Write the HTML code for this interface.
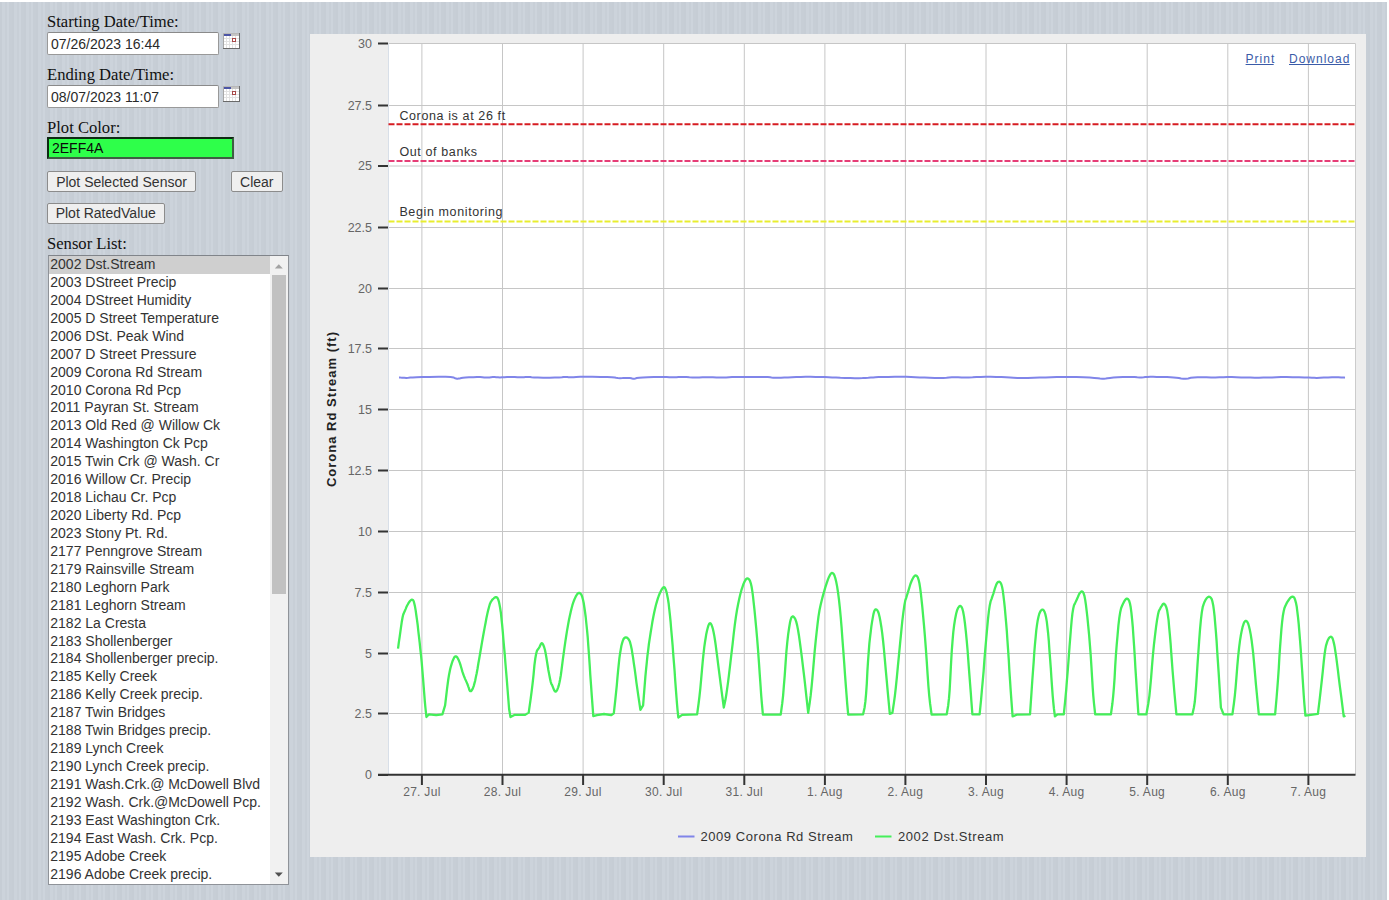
<!DOCTYPE html>
<html><head><meta charset="utf-8"><style>
html,body{margin:0;padding:0;}
body{width:1389px;height:900px;overflow:hidden;position:relative;background:#fff;font-family:"Liberation Sans",sans-serif;}
#bg{position:absolute;left:0;top:2px;width:1387px;height:898px;background-color:#c9d0d8;
background-image:repeating-linear-gradient(90deg,#c6cdd5 0px,#c6cdd5 2px,#ccd3db 2px,#ccd3db 5px,#c8cfd7 5px,#c8cfd7 7px,#cdd4dc 7px,#cdd4dc 9px,#c7ced6 9px,#c7ced6 12px);}
.lbl{position:absolute;left:47px;font-family:"Liberation Serif",serif;font-size:16.6px;color:#111;white-space:nowrap;line-height:1;}
.inp{position:absolute;left:47px;width:170px;height:20.5px;background:#fff;border:1px solid #999;border-top-color:#8a8a8a;border-radius:2px;}
.inp span,.clr span{position:absolute;left:4px;font-size:14px;line-height:1;color:#2a2a2a;white-space:nowrap;}
.cal{position:absolute;left:223px;}
.clr{position:absolute;left:47px;top:137.2px;width:182.5px;height:17.5px;background:#2eff4a;border:2px solid #0e2a12;border-right-color:#3e5e42;border-bottom-color:#3e5e42;}
.btn{position:absolute;height:19.5px;background:#efefef;border:1px solid #8c8c8c;border-radius:2px;font-size:14px;color:#333;white-space:nowrap;}
.btn span{position:absolute;left:0;right:0;text-align:center;line-height:1;}
#sel{position:absolute;left:47.5px;top:255px;width:239px;height:627.5px;background:#fff;border:1px solid #8f9399;border-top-color:#80848a;overflow:hidden;}
#sel .o{position:absolute;left:0;width:219.5px;height:17.93px;font-size:14px;line-height:17.93px;padding-left:1.8px;color:#333;white-space:nowrap;}
#sel .o.sel{background:#cfcfcf;}
#sb{position:absolute;left:221.5px;top:0;width:17.5px;height:100%;background:#f1f1f1;}
#thumb{position:absolute;left:2px;top:18.5px;width:13.5px;height:319px;background:#c1c1c1;}
#panel{position:absolute;left:310px;top:33.5px;width:1056px;height:823px;background:#eeeeee;}
svg.ch{position:absolute;left:0;top:0;}
.pl{font-size:12.5px;fill:#333;letter-spacing:0.62px;}
.yl{font-size:12.5px;fill:#666;text-anchor:end;}
.xl{font-size:12px;fill:#666;text-anchor:middle;letter-spacing:0.3px;}
.yt{font-size:13px;font-weight:bold;fill:#222;text-anchor:middle;letter-spacing:1px;}
.lg{font-size:13px;fill:#333;letter-spacing:0.58px;}
.lk{font-size:12px;fill:#3a5ba8;letter-spacing:1px;}
</style></head><body>
<div id="bg"></div>
<div class="lbl" style="top:14.4px">Starting Date/Time:</div>
<div class="inp" style="top:32.3px"><span style="top:3.8px;left:3px">07/26/2023 16:44</span></div>
<div class="cal" style="top:32.5px"><svg width="17" height="16" viewBox="0 0 17 16"><rect x="0" y="0" width="17" height="16" fill="#fff"/><rect x="1" y="1" width="7" height="2" fill="#4b55a6"/><rect x="8" y="1" width="8" height="2" fill="#c4c4c4"/><g stroke="#e2e2e2" stroke-width="1"><line x1="3.5" y1="3" x2="3.5" y2="15"/><line x1="6.5" y1="3" x2="6.5" y2="15"/><line x1="9.5" y1="3" x2="9.5" y2="15"/><line x1="12.5" y1="3" x2="12.5" y2="15"/><line x1="1" y1="5.5" x2="16" y2="5.5"/><line x1="1" y1="8.5" x2="16" y2="8.5"/><line x1="1" y1="11.5" x2="16" y2="11.5"/></g><rect x="9.5" y="5.5" width="3" height="3" fill="#fff" stroke="#a84848"/><line x1="0.5" y1="0" x2="0.5" y2="16" stroke="#a8a8a8"/><line x1="0" y1="0.5" x2="17" y2="0.5" stroke="#b8b8b8"/><line x1="16.5" y1="0" x2="16.5" y2="16" stroke="#6a6a6a"/><line x1="0" y1="15.5" x2="17" y2="15.5" stroke="#6a6a6a"/></svg></div>
<div class="lbl" style="top:67.4px">Ending Date/Time:</div>
<div class="inp" style="top:85.3px"><span style="top:3.8px;left:3px">08/07/2023 11:07</span></div>
<div class="cal" style="top:85.5px"><svg width="17" height="16" viewBox="0 0 17 16"><rect x="0" y="0" width="17" height="16" fill="#fff"/><rect x="1" y="1" width="7" height="2" fill="#4b55a6"/><rect x="8" y="1" width="8" height="2" fill="#c4c4c4"/><g stroke="#e2e2e2" stroke-width="1"><line x1="3.5" y1="3" x2="3.5" y2="15"/><line x1="6.5" y1="3" x2="6.5" y2="15"/><line x1="9.5" y1="3" x2="9.5" y2="15"/><line x1="12.5" y1="3" x2="12.5" y2="15"/><line x1="1" y1="5.5" x2="16" y2="5.5"/><line x1="1" y1="8.5" x2="16" y2="8.5"/><line x1="1" y1="11.5" x2="16" y2="11.5"/></g><rect x="9.5" y="5.5" width="3" height="3" fill="#fff" stroke="#a84848"/><line x1="0.5" y1="0" x2="0.5" y2="16" stroke="#a8a8a8"/><line x1="0" y1="0.5" x2="17" y2="0.5" stroke="#b8b8b8"/><line x1="16.5" y1="0" x2="16.5" y2="16" stroke="#6a6a6a"/><line x1="0" y1="15.5" x2="17" y2="15.5" stroke="#6a6a6a"/></svg></div>
<div class="lbl" style="top:120.4px">Plot Color:</div>
<div class="clr"><span style="top:1.6px;left:3px;color:#0a0a0a">2EFF4A</span></div>
<div class="btn" style="left:47px;top:171.2px;width:147px;height:19px"><span style="top:2.5px">Plot Selected Sensor</span></div>
<div class="btn" style="left:231px;top:171.2px;width:49.5px;height:19px"><span style="top:2.5px">Clear</span></div>
<div class="btn" style="left:47px;top:202.7px;width:115.5px"><span style="top:2.5px">Plot RatedValue</span></div>
<div class="lbl" style="top:236.4px">Sensor List:</div>
<div id="sel"><div class="o sel" style="top:0.00px">2002 Dst.Stream</div><div class="o" style="top:17.93px">2003 DStreet Precip</div><div class="o" style="top:35.86px">2004 DStreet Humidity</div><div class="o" style="top:53.79px">2005 D Street Temperature</div><div class="o" style="top:71.72px">2006 DSt. Peak Wind</div><div class="o" style="top:89.65px">2007 D Street Pressure</div><div class="o" style="top:107.58px">2009 Corona Rd Stream</div><div class="o" style="top:125.51px">2010 Corona Rd Pcp</div><div class="o" style="top:143.44px">2011 Payran St. Stream</div><div class="o" style="top:161.37px">2013 Old Red @ Willow Ck</div><div class="o" style="top:179.30px">2014 Washington Ck Pcp</div><div class="o" style="top:197.23px">2015 Twin Crk @ Wash. Cr</div><div class="o" style="top:215.16px">2016 Willow Cr. Precip</div><div class="o" style="top:233.09px">2018 Lichau Cr. Pcp</div><div class="o" style="top:251.02px">2020 Liberty Rd. Pcp</div><div class="o" style="top:268.95px">2023 Stony Pt. Rd.</div><div class="o" style="top:286.88px">2177 Penngrove Stream</div><div class="o" style="top:304.81px">2179 Rainsville Stream</div><div class="o" style="top:322.74px">2180 Leghorn Park</div><div class="o" style="top:340.67px">2181 Leghorn Stream</div><div class="o" style="top:358.60px">2182 La Cresta</div><div class="o" style="top:376.53px">2183 Shollenberger</div><div class="o" style="top:394.46px">2184 Shollenberger precip.</div><div class="o" style="top:412.39px">2185 Kelly Creek</div><div class="o" style="top:430.32px">2186 Kelly Creek precip.</div><div class="o" style="top:448.25px">2187 Twin Bridges</div><div class="o" style="top:466.18px">2188 Twin Bridges precip.</div><div class="o" style="top:484.11px">2189 Lynch Creek</div><div class="o" style="top:502.04px">2190 Lynch Creek precip.</div><div class="o" style="top:519.97px">2191 Wash.Crk.@ McDowell Blvd</div><div class="o" style="top:537.90px">2192 Wash. Crk.@McDowell Pcp.</div><div class="o" style="top:555.83px">2193 East Washington Crk.</div><div class="o" style="top:573.76px">2194 East Wash. Crk. Pcp.</div><div class="o" style="top:591.69px">2195 Adobe Creek</div><div class="o" style="top:609.62px">2196 Adobe Creek precip.</div><div id="sb"><div id="thumb"></div><svg style="position:absolute;left:0;top:0" width="17.5" height="627"><path d="M4.8 12.5 L8.8 8.2 L12.8 12.5 Z" fill="#a3a3a3"/><path d="M4.8 616.5 L8.8 620.8 L12.8 616.5 Z" fill="#505050"/></svg></div></div>
<div id="panel"></div>
<svg class="ch" width="1389" height="900" font-family="Liberation Sans, sans-serif"><rect x="388.5" y="43.5" width="967.0" height="731.3" fill="#fff"/><line x1="388.5" y1="713.5" x2="1355.5" y2="713.5" stroke="#c6c6c6" stroke-width="1"/><line x1="388.5" y1="653.5" x2="1355.5" y2="653.5" stroke="#c6c6c6" stroke-width="1"/><line x1="388.5" y1="592.5" x2="1355.5" y2="592.5" stroke="#c6c6c6" stroke-width="1"/><line x1="388.5" y1="531.5" x2="1355.5" y2="531.5" stroke="#c6c6c6" stroke-width="1"/><line x1="388.5" y1="470.5" x2="1355.5" y2="470.5" stroke="#c6c6c6" stroke-width="1"/><line x1="388.5" y1="409.5" x2="1355.5" y2="409.5" stroke="#c6c6c6" stroke-width="1"/><line x1="388.5" y1="348.5" x2="1355.5" y2="348.5" stroke="#c6c6c6" stroke-width="1"/><line x1="388.5" y1="288.5" x2="1355.5" y2="288.5" stroke="#c6c6c6" stroke-width="1"/><line x1="388.5" y1="227.5" x2="1355.5" y2="227.5" stroke="#c6c6c6" stroke-width="1"/><line x1="388.5" y1="166.0" x2="1355.5" y2="166.0" stroke="#c6c6c6" stroke-width="1"/><line x1="388.5" y1="105.5" x2="1355.5" y2="105.5" stroke="#c6c6c6" stroke-width="1"/><line x1="388.5" y1="43.5" x2="1355.5" y2="43.5" stroke="#c6c6c6" stroke-width="1"/><line x1="421.9" y1="43.5" x2="421.9" y2="774.8" stroke="#c6c6c6" stroke-width="1"/><line x1="502.5" y1="43.5" x2="502.5" y2="774.8" stroke="#c6c6c6" stroke-width="1"/><line x1="583.1" y1="43.5" x2="583.1" y2="774.8" stroke="#c6c6c6" stroke-width="1"/><line x1="663.7" y1="43.5" x2="663.7" y2="774.8" stroke="#c6c6c6" stroke-width="1"/><line x1="744.3" y1="43.5" x2="744.3" y2="774.8" stroke="#c6c6c6" stroke-width="1"/><line x1="824.9" y1="43.5" x2="824.9" y2="774.8" stroke="#c6c6c6" stroke-width="1"/><line x1="905.4" y1="43.5" x2="905.4" y2="774.8" stroke="#c6c6c6" stroke-width="1"/><line x1="986.0" y1="43.5" x2="986.0" y2="774.8" stroke="#c6c6c6" stroke-width="1"/><line x1="1066.6" y1="43.5" x2="1066.6" y2="774.8" stroke="#c6c6c6" stroke-width="1"/><line x1="1147.2" y1="43.5" x2="1147.2" y2="774.8" stroke="#c6c6c6" stroke-width="1"/><line x1="1227.8" y1="43.5" x2="1227.8" y2="774.8" stroke="#c6c6c6" stroke-width="1"/><line x1="1308.4" y1="43.5" x2="1308.4" y2="774.8" stroke="#c6c6c6" stroke-width="1"/><line x1="1355.5" y1="43.5" x2="1355.5" y2="774.8" stroke="#cccccc" stroke-width="1"/><line x1="388.5" y1="43.5" x2="388.5" y2="774.8" stroke="#d8dfe8" stroke-width="1"/><line x1="388.5" y1="124.3" x2="1355.5" y2="124.3" stroke="#d61c22" stroke-width="2" stroke-dasharray="6,2"/><text x="399.4" y="119.5" class="pl">Corona is at 26 ft</text><line x1="388.5" y1="161.1" x2="1355.5" y2="161.1" stroke="#e63d76" stroke-width="2" stroke-dasharray="6,2"/><text x="399.4" y="156.4" class="pl">Out of banks</text><line x1="388.5" y1="221.4" x2="1355.5" y2="221.4" stroke="#e8ee2e" stroke-width="2" stroke-dasharray="6,2"/><text x="399.4" y="216.3" class="pl">Begin monitoring</text><polyline points="399.0,377.5 399.5,377.5 400.5,377.6 402.1,377.7 404.2,377.8 406.3,377.9 408.4,377.8 410.5,377.6 412.7,377.4 416.6,377.2 422.2,377.0 429.5,376.9 438.6,376.8 445.6,376.8 450.6,377.0 453.5,377.4 454.4,377.9 455.2,378.3 456.1,378.6 457.0,378.7 457.8,378.7 458.7,378.6 459.5,378.5 460.4,378.3 461.3,378.0 463.0,377.7 465.6,377.5 469.0,377.3 473.4,377.2 477.0,377.1 480.1,377.1 482.4,377.2 484.2,377.4 485.9,377.5 487.6,377.5 489.4,377.4 491.1,377.2 492.8,377.1 494.5,377.1 496.3,377.2 498.0,377.3 499.9,377.4 502.1,377.3 504.5,377.2 507.1,377.0 509.7,376.9 512.2,376.9 514.8,377.0 517.4,377.2 519.8,377.3 522.0,377.3 523.9,377.2 525.6,377.0 527.3,376.9 528.8,376.9 530.2,377.0 531.5,377.3 534.1,377.5 537.9,377.6 543.1,377.7 549.6,377.7 554.9,377.6 559.0,377.5 561.9,377.3 563.7,377.0 565.2,376.9 566.5,376.9 567.5,377.0 568.4,377.2 569.7,377.3 571.4,377.3 573.6,377.2 576.2,377.0 580.2,376.8 585.6,376.8 592.4,376.8 600.6,376.9 607.1,377.0 611.8,377.2 614.8,377.5 616.1,377.8 617.9,378.1 620.0,378.2 622.5,378.1 625.5,377.9 628.0,377.9 629.9,378.0 631.3,378.2 632.2,378.5 633.1,378.7 634.2,378.7 635.4,378.5 636.7,378.1 639.2,377.7 642.9,377.4 647.7,377.2 653.8,377.0 658.9,376.9 663.3,376.9 666.7,377.0 669.3,377.2 671.8,377.3 674.2,377.3 676.4,377.2 678.6,377.0 681.0,376.9 683.6,376.9 686.4,377.0 689.4,377.3 692.5,377.4 695.8,377.5 699.1,377.4 702.6,377.2 706.0,377.2 709.5,377.2 712.9,377.2 716.4,377.4 719.7,377.5 723.0,377.5 726.1,377.4 729.1,377.2 732.1,377.1 734.9,377.0 737.6,377.0 740.2,377.0 743.6,377.0 747.9,377.0 753.1,377.0 759.2,377.0 764.0,377.0 767.7,377.1 770.2,377.3 771.5,377.5 773.2,377.7 775.4,377.8 777.9,377.8 781.0,377.7 784.3,377.6 788.0,377.5 792.0,377.3 796.3,377.0 800.8,376.9 805.6,376.8 810.6,376.8 815.7,376.9 820.5,377.0 824.8,377.1 828.7,377.2 832.2,377.4 836.0,377.6 840.4,377.8 845.1,377.9 850.3,378.1 854.9,378.2 859.0,378.2 862.5,378.1 865.5,377.9 868.3,377.8 870.9,377.6 873.2,377.4 875.4,377.2 878.6,377.1 883.0,377.0 888.4,376.9 894.8,376.8 900.8,376.8 906.2,376.8 911.0,377.0 915.4,377.2 919.9,377.4 924.6,377.6 929.6,377.8 934.8,378.0 939.3,378.1 943.2,378.1 946.5,377.8 949.0,377.5 951.9,377.3 954.9,377.2 958.1,377.2 961.6,377.4 965.1,377.5 968.8,377.4 972.6,377.3 976.5,377.0 980.8,376.9 985.6,376.8 990.7,376.8 996.3,376.9 1001.4,377.0 1006.0,377.2 1010.0,377.5 1013.4,377.8 1017.5,378.1 1022.3,378.1 1027.7,378.0 1033.7,377.8 1039.7,377.6 1045.5,377.4 1051.2,377.2 1056.8,377.0 1062.9,376.9 1069.4,376.9 1076.3,377.0 1083.6,377.3 1089.7,377.6 1094.4,377.9 1097.9,378.2 1100.0,378.5 1102.1,378.7 1104.0,378.7 1105.8,378.5 1107.5,378.2 1110.0,377.9 1113.5,377.6 1117.8,377.3 1123.0,377.0 1127.5,376.9 1131.4,376.9 1134.6,377.0 1137.2,377.3 1139.6,377.4 1141.7,377.4 1143.7,377.3 1145.4,377.0 1147.6,376.9 1150.2,376.8 1153.2,376.8 1156.7,376.9 1160.1,376.9 1163.6,377.0 1167.0,377.1 1170.5,377.2 1173.6,377.4 1176.4,377.7 1178.9,378.0 1181.1,378.5 1183.3,378.7 1185.7,378.7 1188.2,378.4 1190.8,377.8 1193.9,377.4 1197.6,377.2 1201.8,377.2 1206.5,377.3 1211.1,377.4 1215.4,377.4 1219.5,377.3 1223.4,377.2 1227.5,377.1 1231.8,377.1 1236.3,377.2 1241.1,377.4 1245.7,377.5 1250.3,377.6 1254.7,377.7 1259.0,377.7 1263.3,377.6 1267.7,377.5 1272.0,377.4 1276.3,377.2 1281.2,377.1 1286.6,377.1 1292.5,377.2 1299.0,377.3 1304.4,377.4 1308.7,377.6 1311.9,377.7 1314.1,377.8 1316.8,377.9 1320.0,377.8 1323.8,377.6 1328.1,377.4 1332.0,377.2 1335.5,377.2 1338.5,377.2 1341.1,377.4 1343.0,377.5 1344.3,377.6 1345.0,377.7" fill="none" stroke="#8085e9" stroke-width="2"/><polyline points="398.0,648.6 398.3,646.6 398.8,642.6 399.7,636.6 400.8,628.6 401.7,622.3 402.5,617.7 403.1,614.9 403.6,613.8 404.1,612.4 404.8,610.9 405.6,609.1 406.4,607.1 407.3,605.3 408.2,603.7 409.1,602.2 410.0,601.0 410.8,600.2 411.6,599.7 412.3,599.7 413.0,600.0 413.7,601.3 414.3,603.5 415.0,606.6 415.7,610.6 416.3,615.0 417.0,619.9 417.7,625.2 418.3,631.0 419.0,636.9 419.7,642.9 420.3,649.0 421.0,655.2 421.7,662.1 422.3,669.7 423.0,677.9 423.7,686.8 424.3,694.5 424.8,701.1 425.4,707.5 426.4,717.0 429.1,714.3 436.2,715.2 442.4,714.3 445.1,705.4 447.1,688.4 448.2,680.0 449.1,674.4 450.0,669.9 450.9,666.3 451.8,663.3 452.7,660.7 453.6,658.7 454.4,657.1 455.3,656.3 456.2,656.3 457.1,657.1 458.0,658.7 458.9,660.6 459.8,662.9 460.7,665.7 461.6,668.8 462.3,671.4 463.0,673.5 463.6,675.1 464.0,676.2 464.6,677.6 465.2,679.1 466.0,680.9 466.9,682.9 467.7,684.8 468.3,686.6 468.9,688.2 469.3,689.8 469.8,690.8 470.4,691.2 471.0,691.1 471.7,690.4 472.3,689.4 473.0,687.9 473.7,686.1 474.3,683.9 475.1,681.0 475.8,677.4 476.7,673.2 477.6,668.3 478.4,663.3 479.3,658.2 480.2,653.0 481.1,647.7 482.0,642.4 482.9,637.3 483.8,632.3 484.7,627.4 485.6,622.8 486.4,618.3 487.3,614.1 488.2,610.1 489.1,606.8 489.8,604.3 490.6,602.4 491.2,601.3 491.9,600.3 492.7,599.3 493.6,598.5 494.4,597.7 495.3,597.2 496.1,597.1 496.8,597.3 497.4,597.9 498.1,599.2 498.8,601.3 499.4,604.1 500.1,607.7 500.8,612.2 501.4,617.8 502.1,624.3 502.8,631.9 503.4,639.6 504.1,647.3 504.8,655.2 505.4,663.2 506.1,671.3 506.8,679.6 507.6,690.0 509.1,709.0 510.5,717.0 514.4,714.9 525.1,714.9 528.7,712.6 530.7,698.6 531.8,690.1 532.7,682.6 533.6,674.3 534.4,665.4 535.3,658.5 536.2,653.5 537.1,650.4 538.0,649.3 538.8,648.1 539.6,646.8 540.3,645.3 541.0,643.8 541.7,643.2 542.5,643.5 543.2,644.8 544.1,647.0 544.9,649.8 545.6,653.1 546.3,657.0 547.0,661.4 547.7,665.7 548.3,669.7 549.0,673.4 549.7,677.0 550.3,679.9 550.8,682.1 551.3,683.7 551.8,684.6 552.3,685.6 552.8,686.9 553.4,688.4 554.1,690.1 554.8,691.2 555.4,691.6 556.1,691.4 556.8,690.6 557.4,689.4 558.1,687.6 558.8,685.4 559.4,682.8 560.1,679.4 560.8,675.4 561.4,670.8 562.1,665.4 562.8,659.9 563.6,654.1 564.4,648.1 565.3,641.9 566.2,636.0 567.1,630.4 568.0,625.2 568.9,620.3 569.8,615.9 570.7,611.9 571.6,608.3 572.4,605.2 573.3,602.4 574.2,600.0 575.1,597.9 576.0,596.1 576.8,594.7 577.6,593.7 578.3,593.1 579.0,592.9 579.7,593.0 580.3,593.4 581.0,594.2 581.7,595.3 582.3,597.2 583.0,599.7 583.7,603.0 584.3,607.0 585.0,611.7 585.7,617.0 586.3,623.0 587.0,629.7 587.7,637.2 588.3,645.7 589.0,655.0 589.7,665.2 590.3,675.1 591.0,684.7 591.8,696.1 593.3,716.1 596.9,715.2 604.0,714.0 611.1,715.2 613.8,713.4 615.3,699.9 616.1,692.1 616.8,685.3 617.4,678.1 618.1,670.6 618.8,663.9 619.4,658.1 620.1,653.2 620.8,649.2 621.4,645.8 622.1,643.1 622.8,640.9 623.4,639.3 624.2,638.2 624.9,637.6 625.8,637.3 626.7,637.6 627.5,638.1 628.3,638.8 629.0,639.9 629.7,641.2 630.3,643.2 631.0,645.9 631.7,649.2 632.3,653.2 633.1,657.9 633.8,663.2 634.7,669.2 635.6,675.9 636.4,682.4 637.3,688.7 638.4,696.4 640.4,709.9 643.1,705.4 644.6,686.4 645.4,676.4 646.1,669.1 646.8,662.3 647.4,656.1 648.2,650.0 648.9,644.0 649.8,638.1 650.7,632.3 651.6,626.9 652.4,621.8 653.3,617.0 654.2,612.6 655.1,608.5 656.0,604.8 656.9,601.6 657.8,598.7 658.7,596.0 659.7,593.5 660.8,591.2 661.9,589.1 662.9,587.8 663.8,587.2 664.6,587.4 665.2,588.4 665.9,590.0 666.6,592.3 667.2,595.2 667.9,598.8 668.6,603.2 669.2,608.6 669.9,614.8 670.6,621.9 671.2,629.3 671.9,637.1 672.6,645.2 673.2,653.7 673.9,662.3 674.6,671.2 675.2,680.3 675.9,689.7 676.5,697.5 677.0,703.9 677.5,709.7 678.3,717.5 682.2,714.9 697.1,714.3 698.6,703.5 699.5,696.2 700.3,688.6 701.1,679.8 702.0,669.6 702.8,660.7 703.6,653.1 704.3,646.9 705.0,642.0 705.7,637.7 706.3,633.9 707.0,630.7 707.7,628.0 708.3,625.9 708.9,624.4 709.5,623.5 710.1,623.1 710.7,623.5 711.4,624.6 712.1,626.4 712.9,629.0 713.6,632.2 714.3,635.9 715.0,640.2 715.7,645.1 716.4,650.6 717.2,656.6 718.0,663.1 718.9,670.2 719.8,677.2 720.7,684.1 721.8,692.6 723.8,707.6 725.3,700.6 726.2,695.2 727.1,689.2 728.1,681.8 729.2,672.9 730.3,663.7 731.4,654.1 732.6,644.2 733.7,634.0 734.8,624.9 735.9,616.9 737.0,610.0 738.1,604.2 739.2,599.0 740.3,594.3 741.4,590.2 742.6,586.7 743.6,583.7 744.6,581.5 745.6,579.8 746.4,578.8 747.3,578.4 748.2,578.6 749.1,579.4 750.0,580.9 750.8,583.3 751.6,586.7 752.3,591.1 753.0,596.4 753.7,602.8 754.5,610.1 755.3,618.4 756.2,627.8 757.1,638.1 758.0,649.4 758.9,661.8 759.8,675.1 760.6,686.3 761.2,695.4 761.9,703.7 762.9,714.7 771.8,714.7 780.7,714.7 782.2,703.7 783.1,695.6 783.8,686.7 784.7,675.8 785.6,662.9 786.4,651.7 787.3,642.1 788.2,634.2 789.1,628.0 789.9,623.1 790.7,619.6 791.4,617.5 792.1,616.7 792.8,616.4 793.6,616.8 794.4,617.7 795.3,619.1 796.2,621.6 797.1,625.1 798.0,629.7 798.9,635.2 799.8,641.7 800.8,649.2 801.9,657.6 803.0,666.9 804.1,675.9 805.1,684.6 806.2,694.9 808.2,712.9 809.7,702.9 810.7,695.2 811.6,686.6 812.6,675.8 813.7,662.9 814.7,651.2 815.7,640.8 816.7,631.6 817.6,623.6 818.5,616.4 819.5,610.2 820.6,604.9 821.7,600.4 822.8,596.1 824.1,591.7 825.3,587.4 826.7,583.2 827.9,579.7 829.0,576.9 830.0,574.9 830.9,573.6 831.8,572.9 832.7,573.1 833.6,573.9 834.4,575.4 835.3,578.1 836.2,581.7 837.1,586.4 838.0,592.2 838.9,599.2 839.8,607.4 840.7,616.9 841.6,627.6 842.4,638.8 843.3,650.6 844.2,662.9 845.1,675.8 845.9,686.7 846.6,695.6 847.2,703.7 848.2,714.7 863.1,714.3 864.6,707.5 865.4,701.4 866.1,693.6 866.8,683.6 867.4,671.1 868.1,660.2 868.8,650.9 869.4,643.1 870.1,636.9 870.8,631.2 871.4,626.1 872.1,621.6 872.8,617.6 873.4,614.4 874.0,612.0 874.6,610.4 875.2,609.6 875.8,609.3 876.5,609.5 877.2,610.2 878.0,611.5 878.8,613.7 879.6,617.0 880.4,621.3 881.3,626.7 882.2,633.2 883.1,641.0 884.0,650.0 884.9,660.2 885.8,670.3 886.7,680.2 887.8,692.3 889.8,713.8 892.4,712.9 893.9,702.9 894.9,695.6 895.8,687.6 896.8,677.8 897.9,666.2 899.0,654.8 900.1,643.4 901.2,632.2 902.3,621.1 903.4,612.1 904.4,605.2 905.3,600.4 906.2,597.8 907.1,595.0 908.0,592.1 908.9,589.1 909.8,586.0 910.7,583.2 911.7,580.7 912.8,578.5 913.9,576.7 914.9,575.6 915.9,575.4 916.9,576.0 917.8,577.4 918.6,579.8 919.4,583.2 920.1,587.6 920.8,592.9 921.5,599.3 922.3,606.9 923.1,615.6 924.0,625.3 924.9,636.1 925.8,647.9 926.7,660.7 927.6,674.4 928.4,686.0 929.2,695.3 930.1,703.7 931.6,714.7 946.7,714.3 948.2,705.5 949.0,698.2 949.7,689.3 950.3,678.0 951.0,664.2 951.7,652.0 952.5,641.3 953.3,632.2 954.2,624.7 955.2,618.4 956.2,613.5 957.2,609.9 958.3,607.6 959.4,606.2 960.4,605.9 961.3,606.6 962.2,608.2 963.1,611.5 964.0,616.4 964.9,623.0 965.8,631.2 966.7,640.4 967.6,650.5 968.4,661.6 969.3,673.6 970.1,684.0 970.8,692.8 971.4,701.5 972.4,714.3 979.6,714.3 981.1,699.5 981.9,690.2 982.7,681.3 983.6,671.3 984.4,660.2 985.3,649.4 986.2,639.0 987.1,628.9 988.0,619.1 988.9,611.2 989.8,605.2 990.7,601.1 991.6,598.9 992.4,596.4 993.3,593.8 994.2,590.9 995.1,587.8 996.0,585.3 996.8,583.5 997.7,582.3 998.5,581.8 999.3,581.7 1000.1,582.2 1000.8,583.1 1001.4,584.5 1002.1,587.0 1002.8,590.6 1003.4,595.3 1004.1,601.1 1004.8,607.6 1005.4,614.7 1006.1,622.4 1006.8,630.9 1007.4,640.0 1008.1,649.8 1008.8,660.2 1009.4,671.3 1010.1,681.4 1010.7,690.6 1011.4,700.4 1012.6,716.4 1016.7,714.7 1030.0,714.3 1031.5,692.5 1032.3,680.5 1033.0,671.0 1033.7,661.6 1034.3,652.2 1035.0,643.9 1035.7,636.6 1036.3,630.2 1037.0,624.9 1037.7,620.4 1038.5,616.7 1039.3,613.8 1040.2,611.7 1041.1,610.3 1042.0,609.6 1042.9,609.7 1043.8,610.4 1044.6,612.0 1045.4,614.4 1046.1,617.6 1046.8,621.6 1047.4,626.8 1048.1,633.2 1048.8,640.9 1049.4,649.8 1050.1,658.9 1050.8,668.2 1051.4,677.8 1052.1,687.6 1052.7,695.8 1053.3,702.4 1053.9,708.4 1054.9,716.4 1057.6,714.3 1063.8,714.3 1065.3,699.5 1066.2,689.9 1066.9,680.6 1067.8,670.0 1068.7,658.0 1069.5,647.0 1070.3,637.0 1071.0,628.0 1071.7,620.0 1072.4,613.6 1073.2,608.7 1074.0,605.3 1074.9,603.6 1075.8,601.6 1076.8,599.4 1077.9,597.0 1079.0,594.4 1080.1,592.7 1081.1,591.7 1082.0,591.4 1082.9,592.0 1083.7,593.6 1084.5,596.2 1085.2,599.9 1085.9,604.6 1086.6,610.4 1087.4,617.4 1088.2,625.6 1089.1,634.9 1089.9,644.8 1090.7,655.2 1091.4,666.2 1092.1,677.8 1092.7,687.6 1093.3,695.8 1094.0,703.5 1095.2,714.3 1110.9,714.3 1112.4,703.5 1113.2,695.8 1113.9,687.6 1114.6,677.8 1115.2,666.2 1115.9,655.2 1116.7,644.8 1117.6,634.9 1118.4,625.6 1119.3,618.0 1120.2,612.2 1121.1,608.2 1122.0,606.0 1122.9,604.0 1123.8,602.2 1124.7,600.7 1125.6,599.3 1126.4,598.7 1127.3,598.7 1128.2,599.3 1129.1,600.7 1129.9,603.3 1130.7,607.3 1131.4,612.7 1132.1,619.3 1132.8,627.1 1133.4,636.0 1134.1,646.0 1134.8,657.1 1135.4,668.0 1136.1,678.6 1136.9,691.5 1138.4,714.3 1146.4,714.3 1148.3,703.5 1149.4,695.8 1150.2,687.6 1151.1,677.8 1152.0,666.2 1152.9,655.3 1153.9,645.1 1155.0,635.6 1156.1,626.7 1157.1,619.7 1158.0,614.6 1158.8,611.3 1159.4,610.0 1160.2,608.6 1160.9,607.2 1161.8,605.8 1162.7,604.3 1163.6,603.7 1164.4,603.9 1165.3,605.0 1166.2,606.9 1167.1,610.1 1167.8,614.6 1168.6,620.4 1169.2,627.6 1169.9,635.2 1170.6,643.4 1171.2,652.2 1171.9,661.6 1172.6,671.0 1173.4,680.5 1174.4,692.5 1176.4,714.3 1192.4,714.3 1193.9,707.5 1194.8,701.8 1195.4,695.0 1196.1,686.2 1196.8,675.6 1197.5,664.6 1198.3,653.2 1199.1,641.6 1200.0,629.6 1200.9,619.8 1201.8,612.4 1202.7,607.2 1203.6,604.3 1204.5,601.9 1205.5,599.9 1206.6,598.3 1207.7,597.2 1208.7,596.7 1209.7,596.8 1210.7,597.6 1211.6,598.9 1212.4,601.4 1213.2,605.2 1213.9,610.2 1214.6,616.4 1215.2,623.7 1215.9,631.9 1216.6,641.1 1217.2,651.3 1217.9,661.6 1218.6,671.8 1219.4,684.6 1220.9,707.6 1223.6,714.3 1232.4,714.3 1233.9,703.5 1234.8,695.8 1235.6,687.6 1236.4,677.8 1237.3,666.2 1238.2,656.2 1239.1,647.6 1240.0,640.6 1240.9,635.0 1241.8,630.4 1242.7,626.6 1243.6,623.8 1244.4,621.9 1245.3,620.9 1246.2,620.8 1247.1,621.6 1248.0,623.2 1248.9,626.0 1249.8,629.7 1250.7,634.4 1251.6,640.2 1252.4,646.6 1253.2,653.4 1253.9,660.9 1254.6,668.9 1255.3,677.0 1256.0,685.2 1257.0,695.5 1258.8,714.3 1275.1,714.3 1276.6,697.5 1277.4,687.3 1278.1,678.0 1278.8,667.8 1279.4,656.7 1280.1,646.6 1280.8,637.4 1281.4,629.3 1282.1,622.2 1282.8,616.3 1283.6,611.7 1284.4,608.2 1285.3,606.0 1286.3,603.9 1287.4,601.9 1288.7,600.0 1290.0,598.2 1291.2,597.1 1292.4,596.7 1293.4,596.9 1294.3,597.8 1295.1,599.7 1295.9,602.6 1296.7,606.4 1297.3,611.3 1298.0,617.1 1298.7,623.8 1299.3,631.3 1300.0,639.8 1300.7,648.8 1301.3,658.3 1302.0,668.4 1302.7,679.1 1303.3,688.4 1303.8,696.3 1304.4,704.1 1305.4,715.6 1317.9,713.8 1319.9,697.3 1321.0,687.7 1321.9,679.6 1322.8,671.1 1323.7,662.2 1324.5,655.0 1325.3,649.4 1326.0,645.6 1326.7,643.3 1327.3,641.4 1328.0,639.8 1328.7,638.5 1329.3,637.6 1330.0,637.0 1330.7,636.7 1331.3,636.9 1332.0,637.4 1332.7,638.7 1333.3,640.8 1334.0,643.6 1334.7,647.1 1335.4,651.6 1336.2,656.9 1337.0,663.1 1337.9,670.2 1338.8,677.8 1339.8,685.8 1341.2,696.4 1343.7,716.4 1345.4,715.6 1345.4,715.6 1345.4,715.6" fill="none" stroke="#45ef5a" stroke-width="2.3" stroke-linejoin="round"/><line x1="378" y1="774.8" x2="1355.5" y2="774.8" stroke="#333" stroke-width="2"/><line x1="378" y1="775.0" x2="388" y2="775.0" stroke="#333" stroke-width="2"/><text x="372" y="779.2" class="yl">0</text><line x1="378" y1="713.5" x2="388" y2="713.5" stroke="#333" stroke-width="2"/><text x="372" y="717.7" class="yl">2.5</text><line x1="378" y1="653.5" x2="388" y2="653.5" stroke="#333" stroke-width="2"/><text x="372" y="657.7" class="yl">5</text><line x1="378" y1="592.5" x2="388" y2="592.5" stroke="#333" stroke-width="2"/><text x="372" y="596.7" class="yl">7.5</text><line x1="378" y1="531.5" x2="388" y2="531.5" stroke="#333" stroke-width="2"/><text x="372" y="535.7" class="yl">10</text><line x1="378" y1="470.5" x2="388" y2="470.5" stroke="#333" stroke-width="2"/><text x="372" y="474.7" class="yl">12.5</text><line x1="378" y1="409.5" x2="388" y2="409.5" stroke="#333" stroke-width="2"/><text x="372" y="413.7" class="yl">15</text><line x1="378" y1="348.5" x2="388" y2="348.5" stroke="#333" stroke-width="2"/><text x="372" y="352.7" class="yl">17.5</text><line x1="378" y1="288.5" x2="388" y2="288.5" stroke="#333" stroke-width="2"/><text x="372" y="292.7" class="yl">20</text><line x1="378" y1="227.5" x2="388" y2="227.5" stroke="#333" stroke-width="2"/><text x="372" y="231.7" class="yl">22.5</text><line x1="378" y1="166.0" x2="388" y2="166.0" stroke="#333" stroke-width="2"/><text x="372" y="170.2" class="yl">25</text><line x1="378" y1="105.5" x2="388" y2="105.5" stroke="#333" stroke-width="2"/><text x="372" y="109.7" class="yl">27.5</text><line x1="378" y1="43.5" x2="388" y2="43.5" stroke="#333" stroke-width="2"/><text x="372" y="47.7" class="yl">30</text><line x1="421.9" y1="774.8" x2="421.9" y2="785" stroke="#333" stroke-width="2"/><text x="421.9" y="795.5" class="xl">27. Jul</text><line x1="502.5" y1="774.8" x2="502.5" y2="785" stroke="#333" stroke-width="2"/><text x="502.5" y="795.5" class="xl">28. Jul</text><line x1="583.1" y1="774.8" x2="583.1" y2="785" stroke="#333" stroke-width="2"/><text x="583.1" y="795.5" class="xl">29. Jul</text><line x1="663.7" y1="774.8" x2="663.7" y2="785" stroke="#333" stroke-width="2"/><text x="663.7" y="795.5" class="xl">30. Jul</text><line x1="744.3" y1="774.8" x2="744.3" y2="785" stroke="#333" stroke-width="2"/><text x="744.3" y="795.5" class="xl">31. Jul</text><line x1="824.9" y1="774.8" x2="824.9" y2="785" stroke="#333" stroke-width="2"/><text x="824.9" y="795.5" class="xl">1. Aug</text><line x1="905.4" y1="774.8" x2="905.4" y2="785" stroke="#333" stroke-width="2"/><text x="905.4" y="795.5" class="xl">2. Aug</text><line x1="986.0" y1="774.8" x2="986.0" y2="785" stroke="#333" stroke-width="2"/><text x="986.0" y="795.5" class="xl">3. Aug</text><line x1="1066.6" y1="774.8" x2="1066.6" y2="785" stroke="#333" stroke-width="2"/><text x="1066.6" y="795.5" class="xl">4. Aug</text><line x1="1147.2" y1="774.8" x2="1147.2" y2="785" stroke="#333" stroke-width="2"/><text x="1147.2" y="795.5" class="xl">5. Aug</text><line x1="1227.8" y1="774.8" x2="1227.8" y2="785" stroke="#333" stroke-width="2"/><text x="1227.8" y="795.5" class="xl">6. Aug</text><line x1="1308.4" y1="774.8" x2="1308.4" y2="785" stroke="#333" stroke-width="2"/><text x="1308.4" y="795.5" class="xl">7. Aug</text><text transform="translate(336,409) rotate(-90)" class="yt">Corona Rd Stream (ft)</text><line x1="678" y1="836.5" x2="694.5" y2="836.5" stroke="#8085e9" stroke-width="2"/><text x="700.4" y="840.7" class="lg">2009 Corona Rd Stream</text><line x1="875" y1="836.5" x2="891.5" y2="836.5" stroke="#45ef5a" stroke-width="2"/><text x="898" y="840.7" class="lg">2002 Dst.Stream</text><text x="1245.6" y="62.7" class="lk">Print</text><text x="1289" y="62.7" class="lk">Download</text><line x1="1245.6" y1="64.5" x2="1273.7" y2="64.5" stroke="#3a5ba8" stroke-width="1"/><line x1="1289" y1="64.5" x2="1349.7" y2="64.5" stroke="#3a5ba8" stroke-width="1"/></svg>
</body></html>
